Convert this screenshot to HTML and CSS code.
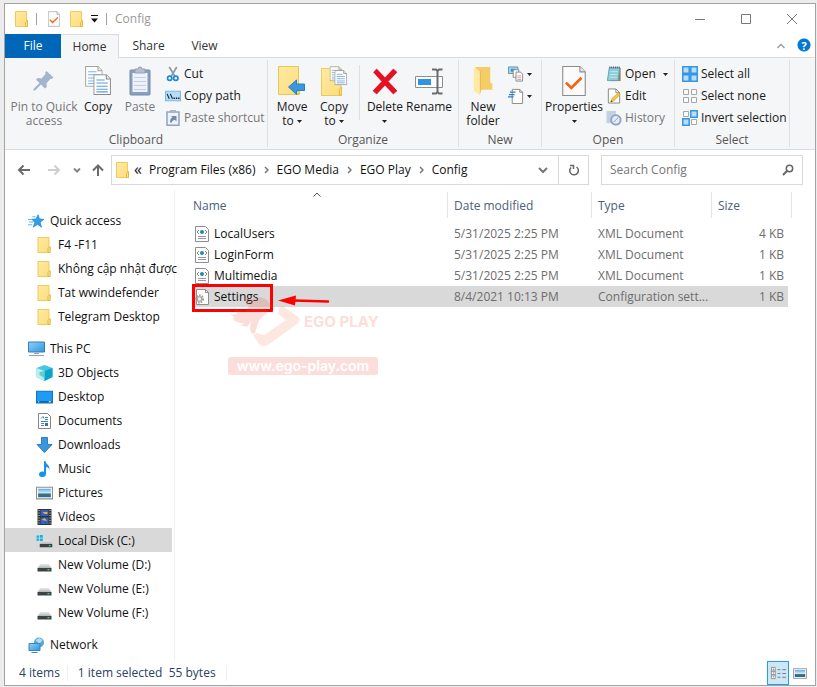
FILE: index.html
```html
<!DOCTYPE html>
<html lang="en">
<head>
<meta charset="utf-8">
<title>Config</title>
<link rel="stylesheet" href="styles.css">
</head>
<body>
<svg class="defs" aria-hidden="true">
  <defs>
    <linearGradient id="gScreen" x1="0" y1="0" x2="1" y2="1"><stop offset="0" stop-color="#8fd0fa"/><stop offset="1" stop-color="#2b97e0"/></linearGradient>
    <linearGradient id="gFolder" x1="0" y1="0" x2="1" y2="1"><stop offset="0" stop-color="#ffeaa3"/><stop offset="1" stop-color="#fddc7c"/></linearGradient>
    <linearGradient id="gDisk" x1="0" y1="0" x2="0" y2="1"><stop offset="0" stop-color="#e8e8e8"/><stop offset="1" stop-color="#b5b5b5"/></linearGradient>
    <linearGradient id="gSky" x1="0" y1="0" x2="0" y2="1"><stop offset="0" stop-color="#5aa9ee"/><stop offset=".5" stop-color="#d5ecfa"/><stop offset=".6" stop-color="#40776f"/><stop offset="1" stop-color="#2b67a8"/></linearGradient>
  </defs>
  <symbol id="folder" viewBox="0 0 14 16">
    <path d="M.5.5h11v9.500h1v5.500H.5z" fill="url(#gFolder)" stroke="#efcb5b"/>
    <path d="M10.500 15.500v-4l2-2v6z" fill="#ffe694" stroke="#e3b93d"/>
  </symbol>
  <symbol id="check-doc" viewBox="0 0 22 28">
    <path d="M.5.5h16l5 5v22H.5z" fill="#fbfbfb" stroke="#8b8b8b"/><path d="M16.500.5v5h5" fill="#e9e9e9" stroke="#8b8b8b"/>
    <path d="M3.500 15.500l5 5L18 11" fill="none" stroke="#f7630c" stroke-width="2.500"/>
  </symbol>
  <symbol id="caret" viewBox="0 0 5 3"><path d="M0 0h5L2.500 3z" fill="#222"/></symbol>
  <symbol id="pin" viewBox="0 0 22 22">
    <path d="M13.500 1l7 6.500-2 1.500-1-.3-4 4.500.3 3.800-2 1.500L8 14.500l-6 6H.5V19l6-6L3 9.500 4.800 8l3.700.5L12.500 4l-.4-1.500z" fill="#a4b4cd"/>
  </symbol>
  <symbol id="page" viewBox="0 0 17 20">
    <path d="M.5.5h12l4 4v15H.5z" fill="#fff" stroke="#868686"/><path d="M12.500.5v4h4" fill="#eee" stroke="#868686"/>
    <path d="M3 5.500h8M3 8.500h11M3 11.500h11M3 14.500h11M3 17h11" stroke="#5b9ce2" fill="none"/>
  </symbol>
  <symbol id="copy" viewBox="0 0 25 29">
    <g opacity=".75"><use href="#page" width="17" height="20"/></g><use href="#page" x="8" y="8" width="17" height="20"/>
  </symbol>
  <symbol id="paste" viewBox="0 0 22 30">
    <rect x="1" y="4" width="20" height="25" rx="1" fill="#8d9fbf" stroke="#7288ad"/>
    <path d="M3.500 7h15v19h-15z" fill="#edf2fa"/><path d="M5 11.500h12M5 15.500h12M5 19.500h12M5 23.500h12" stroke="#c5d0e2"/>
    <path d="M6 7V3h3a2 2 0 0 1 4 0h3v4z" fill="#b7bfcd" stroke="#93a0b5"/>
  </symbol>
  <symbol id="cut" viewBox="0 0 14 17">
    <path d="M3 1l6 10M11 1L5 11" stroke="#8a98a8" stroke-width="1.800" fill="none"/>
    <circle cx="3.500" cy="13" r="2.300" fill="none" stroke="#1e87d2" stroke-width="1.800"/><circle cx="10" cy="13" r="2.300" fill="none" stroke="#1e87d2" stroke-width="1.800"/>
  </symbol>
  <symbol id="path" viewBox="0 0 15 10">
    <path d="M.5.5h14v9H.5z" fill="#b6dcf7" stroke="#7bb9e6"/><path d="M2 3l2 4.500M5 3l2 4.500" stroke="#123" fill="none"/><path d="M8 6.500h1.300v1.300H8zM10.200 6.500h1.300v1.300h-1.300zM12.300 6.500h1.300v1.300h-1.300z" fill="#123"/>
  </symbol>
  <symbol id="shortcut" viewBox="0 0 14 16">
    <path d="M1 2h12v13.300H1z" fill="#eef2f9" stroke="#90a3c2" stroke-width="1.500"/><path d="M4 0h6v3H4z" fill="#a9b4c6"/>
    <path d="M4 12.500c0-3 .8-4.500 2.500-5L5 6h5.500v5.500L8.800 9.800C7 10.300 6 11 5.800 12.500z" fill="#7489ad"/>
  </symbol>
  <symbol id="bigfolder" viewBox="0 0 22 29">
    <path d="M.5.500h20v19h1v9H.5z" fill="url(#gFolder)" stroke="#e9c65a"/><path d="M19 28v-6l2-2v8z" fill="#ffe694" stroke="#e3b93d"/>
  </symbol>
  <symbol id="moveto" viewBox="0 0 28 30">
    <use href="#bigfolder" width="22" height="29"/>
    <path d="M10.500 21l8-7v4h8v6.500h-8v4z" fill="#3a96dd" stroke="#2481c8"/>
  </symbol>
  <symbol id="copyto" viewBox="0 0 27 31">
    <use href="#bigfolder" y="2" width="22" height="29"/><g opacity=".85"><use href="#page" x="9" width="13" height="16"/></g><use href="#page" x="14" y="4" width="13" height="16"/>
  </symbol>
  <symbol id="delete" viewBox="0 0 26 26"><path d="M2 4l3-3 8 8.500L21 1l3.500 3-8.500 9 8.500 9-3.500 3-8-8.500L5 25l-3.500-3 8.500-9z" fill="#e81123" stroke="#c50b1a" stroke-width=".6"/></symbol>
  <symbol id="rename" viewBox="0 0 28 27">
    <path d="M.5 8.500h27v11H.5z" fill="#fff" stroke="#8e8e8e"/><path d="M3 11h13v6H3z" fill="#2f93e4"/>
    <path d="M17 1.500h4l1.500 1.500L24 1.500h3.500M17 25.500h4l1.500-1.500 1.500 1.500h3.500M22.500 3v21" fill="none" stroke="#6b6b6b" stroke-width="2"/>
  </symbol>
  <symbol id="newfolder" viewBox="0 0 20 29">
    <path d="M3 1h14v15l2 1v6H3z" fill="#f5cd67"/><path d="M1 1l6 4v23l-6-4z" fill="#ffe9a8"/><path d="M7 5v23l1-4V5z" fill="#e9ba4c"/>
  </symbol>
  <symbol id="newitem" viewBox="0 0 17 17">
    <path d="M.5 1h10v7H.5z" fill="#a8d5ec" stroke="#5b93ac"/><path d="M3 3h5v3H3z" fill="#3d8fba"/><path d="M5.500 4h6v8h-6z" fill="#fff" stroke="#888"/><path d="M8.500 6.500h5l2 2v7.500h-7z" fill="#fff" stroke="#888"/><path d="M10 10.500h4M10 12.500h4M10 14.500h4" stroke="#c99"/>
  </symbol>
  <symbol id="easy" viewBox="0 0 17 17">
    <path d="M4.500 1.500h8l3 3v12h-11z" fill="#fff" stroke="#888"/><path d="M12.500 1.500v3h3" fill="none" stroke="#888"/><path d="M2 4.500h6M1 7h6M0 9.500h6" stroke="#2b7cc4" stroke-width="1.300"/>
  </symbol>
  <symbol id="notepad" viewBox="0 0 16 17">
    <path d="M4 2h11v14H4z" fill="#9b7a45"/><path d="M3 2h11l-1.500 13.500H1z" fill="#8ccdd9" stroke="#5fa3b1"/><path d="M4 6h8M3.500 9h8M3 12h8" stroke="#c4e9ef"/><path d="M3 1.500h11" stroke="#555" stroke-width="2" stroke-dasharray="1 1"/>
  </symbol>
  <symbol id="edit" viewBox="0 0 15 17">
    <path d="M1.500 1h8l4 4v11h-12z" fill="#fff" stroke="#848484"/><path d="M9.500 1v4h4" fill="none" stroke="#848484"/><path d="M4 15l1-3.500L12 5l2 2-7 7z" fill="#f5c344" stroke="#d59b26" stroke-width=".6"/><path d="M4 15l.6-2 1.500 1.400z" fill="#444"/>
  </symbol>
  <symbol id="history" viewBox="0 0 17 17">
    <path d="M.5 1h10v13H.5z" fill="#c3cfe3"/><circle cx="10.500" cy="10.500" r="5" fill="#e6ecf5" stroke="#8da1c2" stroke-width="2"/><path d="M8 13l2.500-2.500L13 8" stroke="#7f93b5" fill="none"/>
  </symbol>
  <symbol id="selall" viewBox="0 0 16 16"><path d="M.8.800h6.400v6.400H.8zM8.800.8h6.400v6.400H8.800zM.8 8.800h6.400v6.400H.8zM8.800 8.800h6.400v6.400H8.800z" fill="#b9defa" stroke="#3395e4" stroke-width="1.500"/></symbol>
  <symbol id="selnone" viewBox="0 0 16 16"><path d="M1.500 1.500h5v5h-5zM9.500 1.500h5v5h-5zM1.500 9.500h5v5h-5zM9.500 9.500h5v5h-5z" fill="#fcfcfc" stroke="#a6a6a6"/></symbol>
  <symbol id="selinv" viewBox="0 0 16 16"><path d="M1.500 1.500h5v5h-5zM9.500 9.500h5v5h-5z" fill="#fcfcfc" stroke="#a6a6a6"/><path d="M8.800.8h6.400v6.400H8.800zM.8 8.800h6.400v6.400H.8z" fill="#b9defa" stroke="#3395e4" stroke-width="1.500"/></symbol>
  <symbol id="star" viewBox="0 0 16 14">
    <path d="M9.500 1l1.300 4 4.200.4-3.500 2.800 1.200 4.600-3.700-2.600-4.200 2.600L6.500 8.300 3.500 5.400l4-.4z" fill="#2ba0e8" stroke="#1a86cf" stroke-width=".6"/><path d="M0 5.500h4M1 8h4M0 10.500h4M4 3h3" stroke="#5cbcf2"/>
  </symbol>
  <symbol id="pc" viewBox="0 0 17 15"><path d="M.5.500h16v10H.5z" fill="url(#gScreen)" stroke="#397fae"/><path d="M6 12h5M1 14h15" stroke="#8fa3b0"/></symbol>
  <symbol id="cube" viewBox="0 0 16 16"><path d="M8 0l8 3v9l-8 4-8-4V3z" fill="#46c7df"/><path d="M0 3l8 3v10l-8-4z" fill="#b9eef3"/><path d="M8 6l8-3v9l-8 4z" fill="#0ba2cf"/><path d="M3 7l5-1v7l-5-3z" fill="#5fd0cc"/></symbol>
  <symbol id="desktop" viewBox="0 0 16 12"><path d="M.5.500h15v11H.5z" fill="#1e9bf5" stroke="#1473bd"/><path d="M1 10.500h14" stroke="#0c5390"/><path d="M2 10.500h1M12 10.500h2" stroke="#fff"/></symbol>
  <symbol id="documents" viewBox="0 0 13 16"><path d="M.5.500h9l3 3v12H.5z" fill="#fff" stroke="#848484"/><path d="M3 5.500l2-2 1 2M7 4.500h3M7 6.500h3M3 8.500h7M3 10.500h3M3 12.500h3" stroke="#4387be" fill="none"/><path d="M7 10h3v3H7z" fill="#3b749b"/></symbol>
  <symbol id="downloads" viewBox="0 0 16 16"><path d="M5 .500h6v7h4.500L8 15.500.5 7.500H5z" fill="#3b96e0" stroke="#2a7fc6"/></symbol>
  <symbol id="music" viewBox="0 0 12 16"><path d="M5.500 0h1.500c0 3 4.500 4 4 8.500C10.500 7 9 6 7.500 6v7c0 4-7 4-7 .5C.5 11 3 10 5.500 11z" fill="#1793ea"/></symbol>
  <symbol id="pictures" viewBox="0 0 16 12"><path d="M.5.500h15v11H.5z" fill="#fff" stroke="#8e8e8e"/><path d="M2 2h12v8H2z" fill="url(#gSky)"/></symbol>
  <symbol id="videos" viewBox="0 0 14 16"><path d="M0 0h14v16H0z" fill="#333"/><path d="M3 1h8v6H3zM3 8.500h8V15H3z" fill="#315fba"/><path d="M5 3h5v2H7zM4 11l3-2 3 3z" fill="#d9b24c"/><path d="M1.500 1v14M12.500 1v14" stroke="#ddd" stroke-dasharray="1 1.500"/></symbol>
  <symbol id="disk" viewBox="0 0 14 8"><path d="M3 0h8l3 4H0z" fill="url(#gDisk)"/><path d="M0 4h14v3.500H0z" fill="#3d4246"/><path d="M10 5h2v1.300h-2z" fill="#34e05a"/></symbol>
  <symbol id="diskc" viewBox="0 0 16 16"><use href="#disk" x="3" y="7" width="13" height="8"/><path d="M0 2.500h2.500v2.300H0zM3.300 2h3v2.800h-3zM0 5.500h2.500v2.300H0zM3.300 5.500h3V8h-3z" fill="#0cb4ee"/></symbol>
  <symbol id="network" viewBox="0 0 16 16"><circle cx="10.500" cy="5.500" r="5" fill="#5aa8d2"/><path d="M7 3l4-2 3 2-3 4z" fill="#b8dcec"/><path d="M.5 6.500h11v7H.5z" fill="url(#gScreen)" stroke="#3987b5"/><path d="M3 15.500h6" stroke="#3987b5"/></symbol>
  <symbol id="xml" viewBox="0 0 14 16"><path d="M.5.500h10l3 3v12H.5z" fill="#fdfdfd" stroke="#8e8e8e"/><path d="M4 4L2 6l2 2M10 4l2 2-2 2" fill="none" stroke="#888"/><circle cx="7" cy="6" r="2" fill="#1f8f98"/><path d="M3 10.500h8M3 12.500h8" stroke="#9a94a6"/></symbol>
  <symbol id="ini" viewBox="0 0 14 16"><path d="M1.500.500h9l3 3v12h-12z" fill="#fdfdfd" stroke="#8e8e8e"/><path d="M10.500.500v3h3" fill="none" stroke="#8e8e8e"/><circle cx="4.500" cy="10" r="3.500" fill="none" stroke="#a0a0a0" stroke-width="2" stroke-dasharray="1.600 1"/><circle cx="4.500" cy="10" r="2.300" fill="#eee" stroke="#9a9a9a"/></symbol>
</svg>

<div class="window">
  <header class="titlebar">
    <svg class="i-folder"><use href="#folder"/></svg>
    <span class="bar"></span>
    <svg class="i-doc"><use href="#check-doc"/></svg>
    <svg class="i-folder"><use href="#folder"/></svg>
    <button class="qat" aria-label="Customize toolbar"><svg viewBox="0 0 7 8"><path d="M0 .5h7" stroke="#111"/><path d="M0 3.500h7L3.500 7.500z" fill="#111"/></svg></button>
    <span class="bar"></span>
    <h1 class="title">Config</h1>
    <div class="winctl">
      <button aria-label="Minimize"><svg viewBox="0 0 12 12"><path d="M1 6.500h10"/></svg></button>
      <button aria-label="Maximize"><svg viewBox="0 0 12 12"><path d="M1.500 1.500h9v9h-9z"/></svg></button>
      <button aria-label="Close"><svg viewBox="0 0 12 12"><path d="M1 1l10 10M11 1L1 11"/></svg></button>
    </div>
  </header>

  <nav class="tabs">
    <button class="tab file">File</button>
    <button class="tab active">Home</button>
    <button class="tab">Share</button>
    <button class="tab view">View</button>
    <span class="tabfill"></span>
    <button class="collapse" aria-label="Collapse ribbon"><svg viewBox="0 0 8 6"><path d="M.5 5L4 1.500 7.500 5" fill="none" stroke="#999" stroke-width="1.300"/></svg></button>
    <button class="help" aria-label="Help">?</button>
  </nav>

  <section class="ribbon">
    <div class="group clipboard">
      <div class="tools">
        <button class="big dim wide"><svg class="s-pin"><use href="#pin"/></svg><span>Pin to Quick<br>access</span></button>
        <button class="big"><svg><use href="#copy"/></svg><span>Copy</span></button>
        <button class="big dim"><svg><use href="#paste"/></svg><span>Paste</span></button>
        <div class="stack">
          <button><svg><use href="#cut"/></svg>Cut</button>
          <button><svg><use href="#path"/></svg>Copy path</button>
          <button class="dim"><svg><use href="#shortcut"/></svg>Paste shortcut</button>
        </div>
      </div>
      <div class="caption">Clipboard</div>
    </div>
    <div class="group organize">
      <div class="tools">
        <button class="big"><svg><use href="#moveto"/></svg><span>Move<br>to <svg class="car"><use href="#caret"/></svg></span></button>
        <button class="big"><svg><use href="#copyto"/></svg><span>Copy<br>to <svg class="car"><use href="#caret"/></svg></span></button>
        <span class="rule"></span>
        <button class="big del"><svg class="s-del"><use href="#delete"/></svg><span>Delete<br><svg class="car"><use href="#caret"/></svg></span></button>
        <button class="big"><svg class="s-ren"><use href="#rename"/></svg><span>Rename</span></button>
      </div>
      <div class="caption">Organize</div>
    </div>
    <div class="group new">
      <div class="tools">
        <button class="big"><svg><use href="#newfolder"/></svg><span>New<br>folder</span></button>
        <div class="stack tight">
          <button aria-label="New item"><svg><use href="#newitem"/></svg><svg class="car"><use href="#caret"/></svg></button>
          <button aria-label="Easy access"><svg><use href="#easy"/></svg><svg class="car"><use href="#caret"/></svg></button>
        </div>
      </div>
      <div class="caption">New</div>
    </div>
    <div class="group open">
      <div class="tools">
        <button class="big props"><svg><use href="#check-doc"/></svg><span>Properties<br><svg class="car"><use href="#caret"/></svg></span></button>
        <div class="stack">
          <button><svg><use href="#notepad"/></svg>Open<svg class="car"><use href="#caret"/></svg></button>
          <button><svg><use href="#edit"/></svg>Edit</button>
          <button class="dim"><svg><use href="#history"/></svg>History</button>
        </div>
      </div>
      <div class="caption">Open</div>
    </div>
    <div class="group select">
      <div class="tools">
        <div class="stack">
          <button><svg><use href="#selall"/></svg>Select all</button>
          <button><svg><use href="#selnone"/></svg>Select none</button>
          <button><svg><use href="#selinv"/></svg>Invert selection</button>
        </div>
      </div>
      <div class="caption">Select</div>
    </div>
  </section>

  <div class="navrow">
    <div class="arrows">
      <button aria-label="Back"><svg viewBox="0 0 14 12"><path d="M13 6H2M6.500 1.500L2 6l4.500 4.500" stroke="#6b6b6b"/></svg></button>
      <button aria-label="Forward"><svg viewBox="0 0 14 12"><path d="M1 6h11M7.500 1.500L12 6l-4.500 4.500" stroke="#cfcfcf"/></svg></button>
      <button class="small" aria-label="Recent"><svg viewBox="0 0 14 12"><path d="M4 4.500L7 7.500l3-3" stroke="#858585"/></svg></button>
      <button class="up" aria-label="Up"><svg viewBox="0 0 14 12"><path d="M7 12V1.500M2 6.500l5-5 5 5" stroke="#6b6b6b"/></svg></button>
    </div>
    <div class="address">
      <svg class="i-folder"><use href="#folder"/></svg>
      <span class="chev">«</span>
      <a href="#">Program Files (x86)</a>
      <svg class="sep" viewBox="0 0 5 8"><path d="M1 1l3 3-3 3"/></svg>
      <a href="#">EGO Media</a>
      <svg class="sep" viewBox="0 0 5 8"><path d="M1 1l3 3-3 3"/></svg>
      <a href="#">EGO Play</a>
      <svg class="sep" viewBox="0 0 5 8"><path d="M1 1l3 3-3 3"/></svg>
      <a href="#">Config</a>
      <button class="drop" aria-label="Previous locations"><svg viewBox="0 0 10 7"><path d="M1 1l4 4 4-4" fill="none" stroke="#777" stroke-width="2"/></svg></button>
      <button class="refresh" aria-label="Refresh"><svg viewBox="0 0 12 12"><path d="M3 3.500A4.300 4.300 0 1 0 8.500 3M2 1.500h3.500V5" fill="none" stroke="#666" stroke-width="1.500"/></svg></button>
    </div>
    <div class="search">
      <input type="text" placeholder="Search Config" aria-label="Search Config">
      <svg viewBox="0 0 12 12"><circle cx="7.500" cy="4.500" r="3.200" fill="none" stroke="#666" stroke-width="1.500"/><path d="M5 7L1 11" stroke="#666" stroke-width="2"/></svg>
    </div>
  </div>

  <div class="body">
    <aside class="sidebar">
      <ul>
        <li><a href="#"><svg><use href="#star"/></svg>Quick access</a></li>
        <li class="sub"><a href="#"><svg><use href="#folder"/></svg>F4 -F11</a></li>
        <li class="sub"><a href="#"><svg><use href="#folder"/></svg>Không cập nhật được</a></li>
        <li class="sub"><a href="#"><svg><use href="#folder"/></svg>Tat wwindefender</a></li>
        <li class="sub"><a href="#"><svg><use href="#folder"/></svg>Telegram Desktop</a></li>
      </ul>
      <ul>
        <li><a href="#"><svg><use href="#pc"/></svg>This PC</a></li>
        <li class="sub"><a href="#"><svg><use href="#cube"/></svg>3D Objects</a></li>
        <li class="sub"><a href="#"><svg><use href="#desktop"/></svg>Desktop</a></li>
        <li class="sub"><a href="#"><svg><use href="#documents"/></svg>Documents</a></li>
        <li class="sub"><a href="#"><svg><use href="#downloads"/></svg>Downloads</a></li>
        <li class="sub"><a href="#"><svg><use href="#music"/></svg>Music</a></li>
        <li class="sub"><a href="#"><svg><use href="#pictures"/></svg>Pictures</a></li>
        <li class="sub"><a href="#"><svg><use href="#videos"/></svg>Videos</a></li>
        <li class="sub current"><a href="#"><svg><use href="#diskc"/></svg>Local Disk (C:)</a></li>
        <li class="sub vol"><a href="#"><svg><use href="#disk"/></svg>New Volume (D:)</a></li>
        <li class="sub vol"><a href="#"><svg><use href="#disk"/></svg>New Volume (E:)</a></li>
        <li class="sub vol"><a href="#"><svg><use href="#disk"/></svg>New Volume (F:)</a></li>
      </ul>
      <ul>
        <li><a href="#"><svg><use href="#network"/></svg>Network</a></li>
      </ul>
    </aside>
    <main class="files">
      <table>
        <colgroup><col class="c-name"><col class="c-date"><col class="c-type"><col class="c-size"></colgroup>
        <thead><tr>
          <th>Name<svg class="sort" viewBox="0 0 8 5"><path d="M.5 4.500L4 1l3.500 3.500" fill="none" stroke="#555"/></svg></th>
          <th>Date modified</th><th>Type</th><th>Size</th>
        </tr></thead>
        <tbody>
          <tr><td><svg><use href="#xml"/></svg>LocalUsers</td><td>5/31/2025 2:25 PM</td><td>XML Document</td><td>4 KB</td></tr>
          <tr><td><svg><use href="#xml"/></svg>LoginForm</td><td>5/31/2025 2:25 PM</td><td>XML Document</td><td>1 KB</td></tr>
          <tr><td><svg><use href="#xml"/></svg>Multimedia</td><td>5/31/2025 2:25 PM</td><td>XML Document</td><td>1 KB</td></tr>
          <tr class="selected"><td><svg><use href="#ini"/></svg>Settings
            <span class="mark"></span>
            <svg class="arrow" viewBox="0 0 52 12"><path d="M16 5.500L50 6.500" stroke="#f00" stroke-width="2.500" stroke-linecap="round"/><path d="M0 5.500L18 .5l-1 10z" fill="#f00"/></svg>
          </td><td>8/4/2021 10:13 PM</td><td>Configuration sett...</td><td>1 KB</td></tr>
        </tbody>
      </table>
      <div class="watermark">
        <div class="wm-top">
          <svg viewBox="0 0 72 50">
            <path d="M17 1c4 1 7 1 11 0 5-2 11 1 13 5l5 3-6 3-2 5-7 6-4 13-3 1-2-4 1-9-4 6-7-2c2 0 3-1 4-2-6 0-10-2-12-5l4 1c-3-2-5-5-7-5 5 1 7 0 9-1-3-1-4-3-4-6 4 4 8 5 12 4l3-5c-3-1-4-4-4-8z" fill="#ed4a36"/>
            <path d="M52 10c1-1 3-1 4 0l13 9c3 2 3 5 0 8L40 48c-3 2-7 2-9-1l-6-9 3-2 8 2 22-15-8-6z" fill="#f4875c"/>
            <path d="M45 13l-9 13h6l-7 12 15-15h-6l5-10z" fill="#fff"/>
          </svg>
          <span>EGO PLAY</span>
        </div>
        <div class="wm-url">www.ego-play.com</div>
      </div>
    </main>
  </div>

  <footer class="status">
    <span>4 items</span>
    <span class="picked">1 item selected&nbsp; 55 bytes</span>
    <div class="views">
      <button class="on" aria-label="Details"><svg viewBox="0 0 18 14"><path d="M1.500 1h4v4h-4zM1.500 5h4v4h-4zM1.500 9h4v4h-4z" fill="#fff" stroke="#8d8d8d"/><path d="M8 3.500h3M13 3.500h4M8 7.500h3M13 7.500h4M8 11.500h3M13 11.500h4" stroke="#777"/><path d="M3 2.500h1v1H3zM3 6.500h1v1H3zM3 10.500h1v1H3z" fill="#357"/></svg></button>
      <button aria-label="Large icons"><svg class="s-pic"><use href="#pictures"/></svg></button>
    </div>
  </footer>
</div>
</body>
</html>
```
FILE: styles.css
```css
* { box-sizing: border-box; }
body {
  margin: 0;
  padding: 3px 1px 1px 4px;
  min-height: 100vh;
  display: flex;
  background: #ececec;
  font: 12px/16px "Open Sans", "Noto Sans", sans-serif;
  color: #1a1a1a;
}
button { font: inherit; color: inherit; background: none; border: 0; padding: 0; }
a { color: inherit; text-decoration: none; }
svg { display: block; flex: none; }
ul { list-style: none; margin: 0; padding: 0; }
.defs { position: absolute; width: 0; height: 0; }

.window {
  flex: 1;
  min-width: 0;
  display: flex;
  flex-direction: column;
  background: #fff;
  border: 1px solid #a3a3a3;
}

/* title bar */
.titlebar { display: flex; align-items: center; height: 30px; padding-left: 10px; }
.i-folder { width: 14px; height: 16px; }
.i-doc { width: 12px; height: 16px; margin-right: 10px; }
.bar { width: 1px; height: 12px; background: #a0a0a0; }
.titlebar .bar:nth-child(2) { margin: 0 11px 0 7px; }
.qat { margin: 0 8px 0 7px; }
.qat svg { width: 7px; height: 8px; }
.title { margin: 0 0 0 8px; font-size: 12px; font-weight: 400; color: #999; }
.winctl { display: flex; margin-left: auto; align-self: stretch; }
.winctl button { width: 46px; display: flex; align-items: center; justify-content: center; }
.winctl svg { width: 12px; height: 12px; fill: none; stroke: #777; }

/* ribbon tabs */
.tabs { display: flex; height: 24px; color: #333; }
.tab { width: 59px; border-bottom: 1px solid #dadbdc; }
.tab.file { width: 56px; background: #0067b8; color: #fff; border-color: #0067b8; }
.tab.active { width: 58px; background: #f5f6f7; border: solid #dadbdc; border-width: 1px 1px 0 0; }
.tab.view { width: 53px; }
.tabfill { flex: 1; border-bottom: 1px solid #dadbdc; }
.collapse { width: 24px; padding-left: 4px; border-bottom: 1px solid #dadbdc; }
.collapse svg { width: 8px; height: 6px; }
.help {
  width: 18px; padding-right: 4px; border-bottom: 1px solid #dadbdc;
  color: #fff; font-weight: 700; font-size: 11px;
  background: radial-gradient(circle at 7px 11px, #0078d7 6px, transparent 7px);
}

/* ribbon */
.ribbon { display: flex; height: 92px; background: #f5f6f7; border-bottom: 1px solid #dadbdc; }
.group { display: flex; flex-direction: column; margin: 2px 0; border-right: 1px solid #dfe0e1; }
.clipboard { width: 263px; }
.organize { width: 191px; }
.new { width: 83px; }
.open { width: 133px; }
.select { width: 115px; }
.tools { flex: 1; display: flex; }
.caption { height: 15px; text-align: center; color: #555; }
.big { width: 42px; display: flex; flex-direction: column; align-items: center; line-height: 14px; white-space: nowrap; }
.big > svg { width: 30px; height: 30px; margin: 6px 0 4px; }
.big > .s-pin { width: 22px; height: 22px; margin: 10px 0 8px; }
.big > .s-del, .big > .s-ren { width: 28px; height: 27px; margin: 8px 0 5px; }
.wide { width: 66px; margin-left: 6px; }
.organize .tools, .new .tools { padding-left: 3px; }
.rule { width: 1px; margin: 5px 4px 12px; background: #dfe0e1; }
.dim { color: #777; }
.car { display: inline-block; width: 5px; height: 3px; vertical-align: middle; }
.big.del { margin-right: 2px; }
.stack { display: flex; flex-direction: column; padding-top: 3px; margin-left: 4px; }
.stack button { height: 22px; display: flex; align-items: center; gap: 3px; white-space: nowrap; }
.stack svg { width: 16px; height: 16px; }
.stack svg.car { width: 5px; height: 3px; margin-left: 4px; }
.tight svg.car { margin-left: 0; }
.props { width: 56px; margin-left: 4px; }
.select .stack { margin-left: 7px; }

/* address row */
.navrow { display: flex; align-items: center; height: 40px; padding: 0 12px; }
.arrows { display: flex; width: 94px; align-items: center; }
.arrows button { width: 30px; }
.arrows svg { width: 14px; height: 12px; fill: none; stroke-width: 2; }
.arrows .small { width: 14px; margin-left: -7px; }
.arrows .up { width: 14px; margin-left: 7px; }
.address { flex: 1; display: flex; align-items: center; height: 30px; border: 1px solid #d9d9d9; padding-left: 4px; color: #111; white-space: nowrap; }
.chev { margin: 0 7px 3px 4px; font-size: 16px; }
.sep { width: 5px; height: 8px; margin: 0 8px; fill: none; stroke: #777; stroke-width: 1.500; }
.drop { margin-left: auto; width: 30px; display: flex; justify-content: center; }
.drop svg { width: 10px; height: 7px; }
.refresh { width: 30px; align-self: stretch; border-left: 1px solid #d9d9d9; display: flex; align-items: center; justify-content: center; }
.refresh svg { width: 12px; height: 12px; }
.search { width: 202px; margin-left: 12px; display: flex; align-items: center; height: 30px; border: 1px solid #d9d9d9; padding: 0 8px; }
.search input { flex: 1; min-width: 0; border: 0; padding: 0; background: none; font: inherit; outline: 0; }
.search input::placeholder { color: #757575; opacity: 1; }
.search svg { width: 12px; height: 12px; }

/* panes */
.body { flex: 1; display: flex; }
.sidebar { width: 170px; padding: 18px 2px 0 0; border-right: 1px solid #f0f0f0; color: #111; }
.sidebar ul + ul { margin-top: 8px; }
.sidebar a { display: flex; align-items: center; gap: 5px; height: 24px; padding: 1px 0 0 23px; white-space: nowrap; }
.sidebar svg { width: 17px; height: 16px; }
.sidebar .sub a { padding-left: 31px; }
.current { background: #d9d9d9; }
.sidebar .vol svg { height: 8px; margin-top: 6px; }

.files { flex: 1; position: relative; padding: 2px 23px 0 17px; min-width: 0; }
table { width: 100%; border-collapse: separate; border-spacing: 0; table-layout: fixed; color: #6d6d6d; }
.c-name { width: 256px; }
.c-date { width: 144px; }
.c-type { width: 120px; }
th { position: relative; height: 26px; padding: 1px 0 0 6px; text-align: left; font-weight: 400; color: #4c607a; border-right: 1px solid #e5e5e5; }
th:first-child { padding-left: 1px; }
.sort { position: absolute; left: 121px; top: 0; width: 8px; height: 5px; }
tbody::before { content: ""; display: block; height: 5px; }
td { position: relative; height: 21px; padding: 1px 0 0 6px; white-space: nowrap; }
td:first-child { padding-left: 3px; color: #111; }
td:first-child > svg:first-child { display: inline-block; width: 14px; height: 16px; margin-right: 5px; vertical-align: middle; }
td:last-child { text-align: right; padding-right: 4px; border-right: 4px solid transparent; background-clip: padding-box; }
.selected td { background-color: #d9d9d9; }
.mark { position: absolute; left: 0; top: -2px; width: 81px; height: 28px; border: 3px solid #f00; }
.arrow { position: absolute; left: 86px; top: 9px; width: 52px; height: 12px; z-index: 1; }

.watermark { position: absolute; left: 53px; top: 107px; width: 150px; opacity: .18; }
.wm-top { display: flex; align-items: center; color: #ed4a36; font: 700 15px/20px Inter, sans-serif; white-space: nowrap; }
.wm-top svg { width: 72px; height: 50px; }
.wm-top span { margin-left: 4px; }
.wm-url { margin-top: 10px; height: 18px; border-radius: 3px; background: #ed4a36; color: #fff; text-align: center; font: 600 14px/17px Inter, sans-serif; }

/* status bar */
.status { display: flex; align-items: center; height: 24px; padding: 0 4px 0 14px; color: #2b4163; }
.picked { margin-left: 7px; padding: 0 10px; border: solid #eee; border-width: 0 1px; }
.views { margin-left: auto; display: flex; align-self: stretch; }
.views button { width: 22px; display: flex; align-items: center; justify-content: center; }
.views .on { background: #cce8f6; border: 1px solid #26a0da; }
.views svg { width: 17px; height: 14px; }
.views .s-pic { width: 14px; height: 11px; }
```
